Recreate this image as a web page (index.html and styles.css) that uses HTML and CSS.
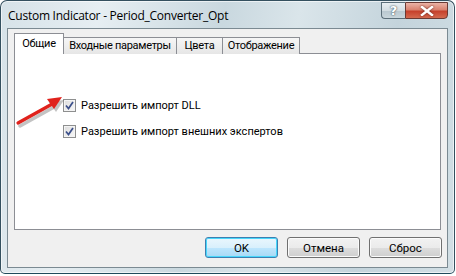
FILE: index.html
```html
<!DOCTYPE html>
<html lang="ru">
<head>
<meta charset="utf-8">
<title>Custom Indicator</title>
<link rel="stylesheet" href="styles.css">
</head>
<body>
<div class="window">
  <div class="titlebar">
    <span class="title">Custom Indicator - Period_Converter_Opt</span>
    <div class="caption-buttons">
      <div class="cap help">?</div>
      <div class="cap close">
        <svg width="14" height="10" viewBox="0 0 14 10"><path d="M2 1 L12 9 M12 1 L2 9" stroke="#ffffff" stroke-width="2.4" stroke-linecap="square"/></svg>
      </div>
    </div>
  </div>
  <div class="client">
    <div class="tabs">
      <div class="tab active tab-general">Общие</div>
      <div class="tab tab-inputs">Входные параметры</div>
      <div class="tab tab-colors">Цвета</div>
      <div class="tab tab-view">Отображение</div>
    </div>
    <div class="panel">
      <label class="check"><span class="box"><svg width="9" height="9" viewBox="0 0 9 9"><path d="M1 4.5 L3.5 7.5 L8 1" fill="none" stroke="#3b4f8a" stroke-width="1.7"/></svg></span>Разрешить импорт DLL</label>
      <label class="check"><span class="box"><svg width="9" height="9" viewBox="0 0 9 9"><path d="M1 4.5 L3.5 7.5 L8 1" fill="none" stroke="#3b4f8a" stroke-width="1.7"/></svg></span>Разрешить импорт внешних экспертов</label>
    </div>
    <div class="buttons">
      <button class="btn default">OK</button>
      <button class="btn">Отмена</button>
      <button class="btn">Сброс</button>
    </div>
  </div>
</div>
<svg class="arrow" width="70" height="40" viewBox="0 0 70 40">
  <g transform="translate(2,3)" opacity="0.35">
    <path d="M6 32 L42 12" stroke="#555" stroke-width="3.5" stroke-linecap="round"/>
    <path d="M50 6 L35 8 L42 18 Z" fill="#555"/>
  </g>
  <path d="M6 32 L42 12" stroke="#e0221c" stroke-width="3.2" stroke-linecap="round"/>
  <path d="M50 6 L35 8 L42 18 Z" fill="#e0221c"/>
</svg>
</body>
</html>
```
FILE: styles.css
```css
html, body {
  margin: 0;
  padding: 0;
  background: #ffffff;
}
body {
  width: 456px;
  height: 276px;
  position: relative;
  font-family: Roboto, "Liberation Sans", sans-serif;
  font-size: 11px;
  color: #000;
}
.window {
  box-sizing: border-box;
  width: 455px;
  height: 274px;
  border: 1px solid #34505f;
  border-bottom-color: #1f4a5c;
  border-radius: 7px 7px 5px 5px;
  background: linear-gradient(100deg, #d6e2e8 0%, #e6eef2 20%, #c9d8df 45%, #dae5ea 60%, #c4d4dc 80%, #d2dfe5 100%);
  box-shadow: inset 0 0 0 1px rgba(255,255,255,0.6);
  padding: 0 6px 5px 6px;
  display: flex;
  flex-direction: column;
}
.titlebar {
  height: 29px;
  display: flex;
  align-items: flex-start;
  justify-content: space-between;
}
.title {
  margin-top: 6px;
  margin-left: 1px;
  font-family: "Open Sans", "Liberation Sans", sans-serif;
  font-size: 12px;
  letter-spacing: -0.25px;
  color: #000;
}
.caption-buttons {
  display: flex;
  margin-top: 1px;
}
.cap {
  height: 15px;
  border: 1px solid #5c6f7a;
  display: flex;
  align-items: center;
  justify-content: center;
}
.help {
  width: 23px;
  border-right: none;
  border-radius: 0 0 0 4px;
  background: linear-gradient(#e8eef1 0%, #d3dde2 50%, #b8c7cf 51%, #c9d6dc 100%);
  color: #fff;
  font-family: "DejaVu Sans", sans-serif;
  font-size: 13px;
  font-weight: bold;
  text-shadow: 0 0 2px #4a5c66, 0 0 1px #4a5c66;
}
.close {
  width: 41px;
  border-radius: 0 0 4px 0;
  border-color: #6a3a34;
  background: linear-gradient(#eab3a6 0%, #d9826f 45%, #c6412c 55%, #d46a4f 100%);
}
.close svg {
  filter: drop-shadow(0 0 1px #6b2a20);
}
.client {
  flex: 1;
  background: #f0f0f0;
  border: 1px solid #7b8a92;
  padding: 4px 6px 9px 6px;
  display: flex;
  flex-direction: column;
}
.tabs {
  display: flex;
  align-items: flex-end;
  height: 21px;
  margin-bottom: -1px;
  position: relative;
  z-index: 1;
}
.tab {
  box-sizing: border-box;
  height: 17px;
  border: 1px solid #8c8e94;
  border-left: none;
  border-bottom: none;
  background: linear-gradient(#f6f6f6, #e6e6e6);
  line-height: 16px;
  text-align: center;
  white-space: nowrap;
  letter-spacing: -0.3px;
}
.tab.active {
  height: 21px;
  border-left: 1px solid #8c8e94;
  background: #ffffff;
  line-height: 20px;
}
.tab-general { width: 50px; }
.tab-inputs { width: 113px; }
.tab-colors { width: 46px; }
.tab-view { width: 77px; }
.panel {
  height: 177px;
  box-sizing: border-box;
  background: #ffffff;
  border: 1px solid #8c8e94;
  padding: 44px 0 0 48px;
  display: flex;
  flex-direction: column;
  gap: 12px;
}
.check {
  display: flex;
  align-items: center;
  gap: 5px;
  height: 14px;
}
.box {
  box-sizing: border-box;
  width: 13px;
  height: 13px;
  border: 1px solid #8e8f8f;
  background: linear-gradient(135deg, #dcdcdc, #f8f8f8);
  box-shadow: inset 0 0 0 1px #f4f4f4;
  display: flex;
  align-items: center;
  justify-content: center;
}
.buttons {
  display: flex;
  justify-content: flex-end;
  gap: 9px;
  margin-top: 7px;
  margin-right: -1px;
}
.btn {
  box-sizing: border-box;
  width: 73px;
  height: 21px;
  border: 1px solid #707070;
  border-radius: 3px;
  background: linear-gradient(#f2f2f2 0%, #ebebeb 50%, #dddddd 51%, #cfcfcf 100%);
  box-shadow: inset 0 0 0 1px #fbfbfb;
  font-family: Roboto, "Liberation Sans", sans-serif;
  font-size: 11.5px;
  color: #000;
  padding: 0;
}
.btn.default {
  border-color: #3c7fb1;
  background: linear-gradient(#eaf6fd 0%, #d9f0fc 50%, #bee6fd 51%, #a7d9f5 100%);
  box-shadow: inset 0 0 0 1px #48d7fb;
}
.arrow {
  position: absolute;
  left: 12px;
  top: 91px;
}
```
